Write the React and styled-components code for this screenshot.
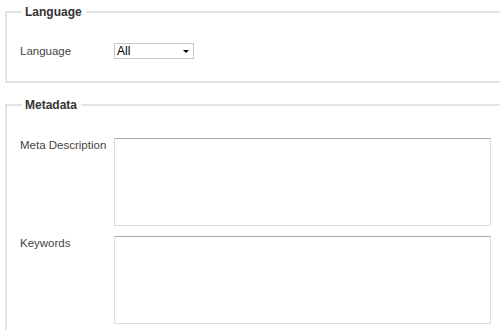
import React from "react";
import styled, { createGlobalStyle } from "styled-components";

const Global = createGlobalStyle`
  html, body { margin: 0; padding: 0; background: #fff; overflow: hidden; }
  body { font-family: "Liberation Sans", Arial, sans-serif; }
`;

const Page = styled.div`
  width: 500px;
  height: 330px;
  overflow: hidden;
  padding: 5px 0 0 5px;
  box-sizing: border-box;
`;

const Fieldset = styled.fieldset`
  width: 520px;
  box-sizing: border-box;
  margin: 0 0 ${(p) => p.$gap || 0}px 0;
  padding: ${(p) => p.$top}px 13px ${(p) => p.$bottom}px;
  border: 2px solid #e4e4e4;
  min-inline-size: 0;
`;

const Legend = styled.legend`
  margin-left: 2px;
  padding: 0 4px 0 3px;
  font-size: 12px;
  line-height: 14px;
  font-weight: bold;
  color: #333;
`;

const Row = styled.div`
  display: flex;
  align-items: ${(p) => (p.$center ? "center" : "flex-start")};
  margin-bottom: ${(p) => p.$mb || 0}px;
`;

const Label = styled.label`
  width: 94px;
  flex: none;
  font-size: 11.5px;
  line-height: 14px;
  color: #444;
  padding-top: ${(p) => p.$pt || 0}px;
`;

const SelectBox = styled.div`
  width: 80px;
  height: 16px;
  box-sizing: border-box;
  border: 1px solid #c9c9c9;
  background: #fff;
  display: flex;
  align-items: center;
  justify-content: space-between;
  padding: 0 3px 0 2px;
  font-size: 12px;
  color: #000;
`;

const Arrow = styled.span`
  width: 0;
  height: 0;
  border-left: 3px solid transparent;
  border-right: 3px solid transparent;
  border-top: 3px solid #000;
  margin-right: 1px;
`;

const TextArea = styled.textarea`
  width: 377px;
  height: 88px;
  box-sizing: border-box;
  margin: 0;
  padding: 2px;
  border: 1px solid #dadde2;
  border-top-color: #a9a9ad;
  resize: none;
  outline: none;
  font-family: "Liberation Sans", Arial, sans-serif;
  font-size: 12px;
`;

export default function App() {
  return (
    <>
      <Global />
      <Page>
        <Fieldset $top={24} $bottom={22} $gap={15}>
          <Legend>Language</Legend>
          <Row $center>
            <Label>Language</Label>
            <SelectBox>
              <span>All</span>
              <Arrow />
            </SelectBox>
          </Row>
        </Fieldset>
        <Fieldset $top={26} $bottom={0}>
          <Legend>Metadata</Legend>
          <Row $mb={10}>
            <Label $pt={0}>Meta Description</Label>
            <TextArea />
          </Row>
          <Row $mb={10}>
            <Label $pt={0}>Keywords</Label>
            <TextArea />
          </Row>
        </Fieldset>
      </Page>
    </>
  );
}
